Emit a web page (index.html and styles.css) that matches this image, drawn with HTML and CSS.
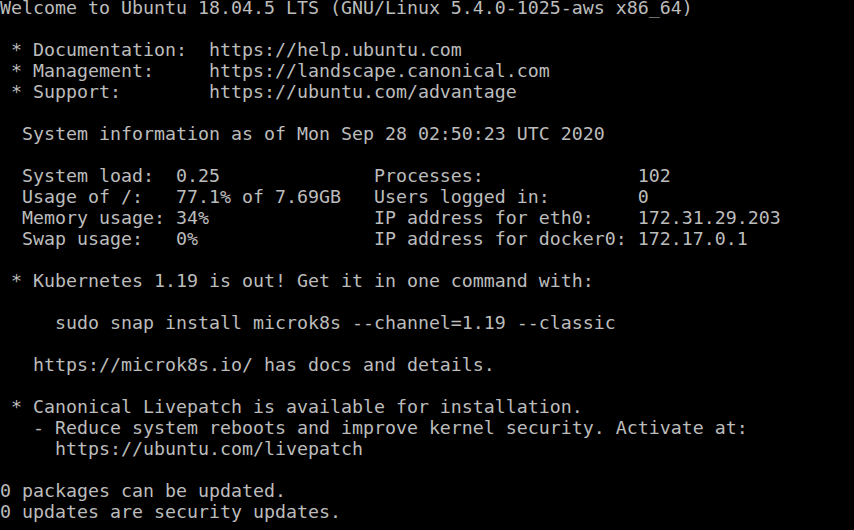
FILE: index.html
```html
<!DOCTYPE html>
<html>
<head>
<meta charset="utf-8">
<link rel="stylesheet" href="styles.css">
</head>
<body>
<pre class="term">Welcome to Ubuntu 18.04.5 LTS (GNU/Linux 5.4.0-1025-aws x86_64)

 * Documentation:  https://help.ubuntu.com
 * Management:     https://landscape.canonical.com
 * Support:        https://ubuntu.com/advantage

  System information as of Mon Sep 28 02:50:23 UTC 2020

  System load:  0.25              Processes:              102
  Usage of /:   77.1% of 7.69GB   Users logged in:        0
  Memory usage: 34%               IP address for eth0:    172.31.29.203
  Swap usage:   0%                IP address for docker0: 172.17.0.1

 * Kubernetes 1.19 is out! Get it in one command with:

     sudo snap install microk8s --channel=1.19 --classic

   https://microk8s.io/ has docs and details.

 * Canonical Livepatch is available for installation.
   - Reduce system reboots and improve kernel security. Activate at:
     https://ubuntu.com/livepatch

0 packages can be updated.
0 updates are security updates.</pre>
</body>
</html>
```

FILE: styles.css
```css
html, body {
  margin: 0;
  padding: 0;
  background: #000;
  width: 854px;
  height: 530px;
  overflow: hidden;
}
.term {
  margin: -3px 0 0 0;
  padding: 0;
  font-family: "DejaVu Sans Mono", monospace;
  font-size: 18.27px;
  line-height: 21px;
  color: #bcbcbc;
  white-space: pre;
}
```
